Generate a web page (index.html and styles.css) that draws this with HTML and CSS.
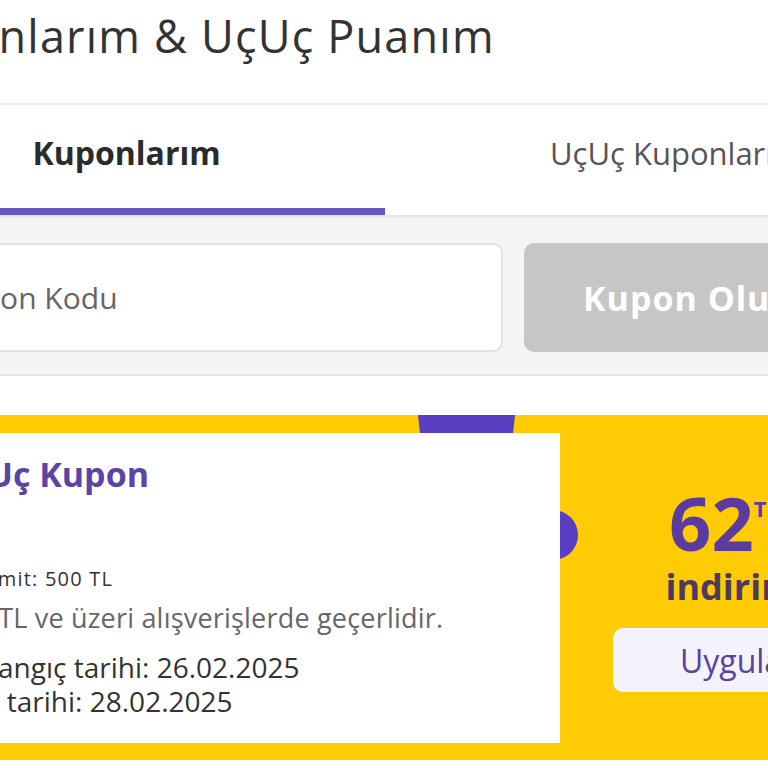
FILE: index.html
```html
<!DOCTYPE html>
<html lang="tr">
<head>
<meta charset="utf-8">
<title>Kuponlarım &amp; UçUç Puanım</title>
<link rel="stylesheet" href="styles.css">
</head>
<body>
<div class="page">
  <header class="header">
    <h1 class="title">Kuponlarım &amp; UçUç Puanım</h1>
  </header>
  <nav class="tabs">
    <div class="tab tab-active">Kuponlarım</div>
    <div class="tab tab-other">UçUç Kuponlarım</div>
  </nav>
  <section class="code-bar">
    <div class="code-input">Kupon Kodu</div>
    <div class="code-button">Kupon Oluştur</div>
  </section>
  <section class="coupon">
    <span class="notch-top"></span>
    <span class="notch-side"></span>
    <div class="coupon-body">
      <div class="coupon-title">UçUç Kupon</div>
      <div class="coupon-limit">Üst limit: 500 TL</div>
      <div class="coupon-desc">500 TL ve üzeri alışverişlerde geçerlidir.</div>
      <div class="coupon-date coupon-date-first">Başlangıç tarihi: 26.02.2025</div>
      <div class="coupon-date">Bitiş tarihi: 28.02.2025</div>
    </div>
    <div class="coupon-side">
      <div class="amount">62<span class="currency">TL</span></div>
      <div class="amount-label">indirim</div>
      <div class="apply">Uygula</div>
    </div>
  </section>
</div>
</body>
</html>
```
FILE: styles.css
```css
html, body {
  margin: 0;
  padding: 0;
  overflow: hidden;
  background: #ffffff;
}
body {
  font-family: "Open Sans", "Liberation Sans", sans-serif;
  color: #333333;
}
.page {
  width: 1034px;
  margin-left: -132px;
}
.header {
  padding: 8px 16px 39px;
  border-bottom: 2px solid #ebebeb;
}
.title {
  margin: 0;
  font-size: 45px;
  line-height: 56px;
  letter-spacing: 1.2px;
  font-weight: 400;
  color: #333333;
}
.tabs {
  display: flex;
  border-bottom: 3px solid #e8e8e8;
}
.tab {
  line-height: 40px;
  padding: 28px 0 35px;
  border-bottom: 7px solid transparent;
  white-space: nowrap;
}
.tab-active {
  width: 517px;
  flex: none;
  text-align: center;
  font-size: 32px;
  font-weight: 700;
  color: #2b2b2b;
  border-bottom-color: #6a52c0;
}
.tab-other {
  flex: 1;
  text-align: left;
  padding-left: 165px;
  font-size: 31px;
  color: #555555;
}
.code-bar {
  display: flex;
  gap: 21px;
  padding: 25px 33px 22px;
  background: #f5f5f5;
  border-bottom: 2px solid #e4e4e4;
}
.code-input {
  flex: 1;
  box-sizing: border-box;
  height: 109px;
  display: flex;
  align-items: center;
  padding-left: 42px;
  background: #ffffff;
  border: 2px solid #e2e2e2;
  border-radius: 10px;
  font-size: 30px;
  color: #666666;
}
.code-button {
  width: 345px;
  box-sizing: border-box;
  height: 109px;
  display: flex;
  align-items: center;
  padding-left: 59px;
  background: #c6c6c6;
  border-radius: 10px;
  font-size: 34px;
  letter-spacing: 1px;
  font-weight: 700;
  color: #ffffff;
  white-space: nowrap;
  overflow: hidden;
}
.coupon {
  position: relative;
  display: flex;
  margin: 39px 0 0 33px;
  padding: 18px 0 17px 18px;
  background: #ffcb05;
  box-shadow: 0 3px 2px rgba(200, 160, 40, 0.45);
}
.notch-top {
  position: absolute;
  left: 517px;
  top: 0;
  width: 97px;
  height: 18px;
  background: #5a3fc2;
  clip-path: polygon(0 0, 100% 0, 98% 100%, 2% 100%);
}
.notch-side {
  position: absolute;
  left: 627px;
  top: 95px;
  width: 50px;
  height: 50px;
  border-radius: 50%;
  background: #5a3fc2;
}
.coupon-body {
  position: relative;
  z-index: 1;
  width: 641px;
  box-sizing: border-box;
  padding: 20px 0 0 25px;
  height: 310px;
  background: #ffffff;
  white-space: nowrap;
}
.coupon-title {
  font-size: 34px;
  line-height: 42px;
  font-weight: 700;
  color: #5a44a6;
}
.coupon-limit {
  margin-top: 71px;
  font-size: 20px;
  line-height: 26px;
  letter-spacing: 1.2px;
  color: #333333;
}
.coupon-desc {
  margin-top: 10px;
  font-size: 27px;
  line-height: 32px;
  letter-spacing: 0.2px;
  color: #666666;
}
.coupon-date {
  font-size: 28px;
  line-height: 34px;
  color: #333333;
}
.coupon-date-first {
  margin-top: 16px;
}
.coupon-side {
  flex: 1;
  padding: 50px 53px 0;
  text-align: center;
  white-space: nowrap;
}
.amount {
  font-size: 74px;
  line-height: 80px;
  font-weight: 700;
  color: #5b3ba0;
}
.currency {
  font-size: 22px;
  line-height: 22px;
  vertical-align: top;
  position: relative;
  top: 14px;
  padding-right: 14px;
}
.amount-label {
  margin-top: 4px;
  font-size: 36px;
  line-height: 40px;
  font-weight: 700;
  color: #4d3a5e;
}
.apply {
  margin-top: 21px;
  height: 64px;
  display: flex;
  align-items: center;
  justify-content: center;
  background: #f4f2fb;
  border-radius: 10px;
  font-size: 32px;
  color: #5a42a0;
}
```
